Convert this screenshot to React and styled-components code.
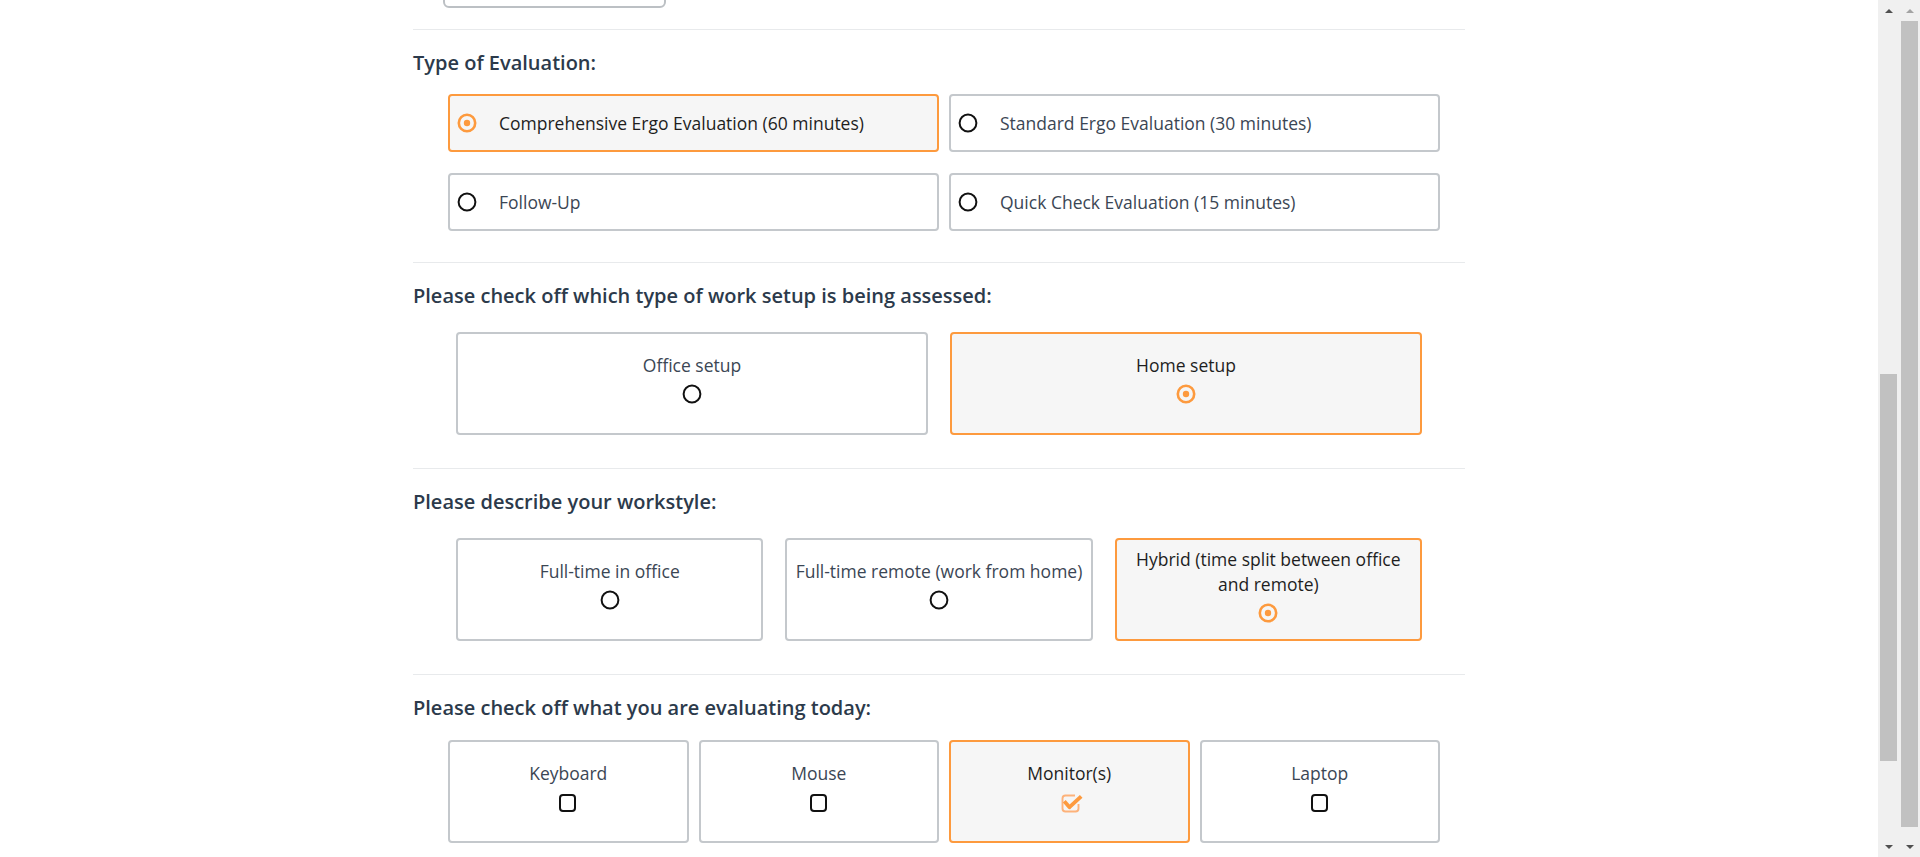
import React, { useLayoutEffect, useRef } from 'react';
import styled, { createGlobalStyle } from 'styled-components';

const ORANGE = '#fd9a3e';

const GlobalStyle = createGlobalStyle`
  html, body {
    margin: 0;
    padding: 0;
    background: #ffffff;
    overflow: hidden;
  }
  body {
    font-family: "Open Sans", "Liberation Sans", sans-serif;
  }
  * {
    box-sizing: border-box;
  }
`;

const evaluationTypes = [
  { id: 'comprehensive', label: 'Comprehensive Ergo Evaluation (60 minutes)', checked: true },
  { id: 'standard', label: 'Standard Ergo Evaluation (30 minutes)' },
  { id: 'follow-up', label: 'Follow-Up' },
  { id: 'quick', label: 'Quick Check Evaluation (15 minutes)' }
];

const setups = [
  { id: 'office', label: 'Office setup' },
  { id: 'home', label: 'Home setup', checked: true }
];

const workstyles = [
  { id: 'in-office', label: 'Full-time in office' },
  { id: 'remote', label: 'Full-time remote (work from home)' },
  { id: 'hybrid', label: 'Hybrid (time split between office and remote)', checked: true }
];

const equipment = [
  { id: 'keyboard', label: 'Keyboard' },
  { id: 'mouse', label: 'Mouse' },
  { id: 'monitor', label: 'Monitor(s)', checked: true },
  { id: 'laptop', label: 'Laptop' }
];

// fields further up the form, scrolled out of view
const earlierFields = [
  { id: 'name', width: 420 },
  { id: 'email', width: 420 },
  { id: 'date', width: 223 }
];

const RadioIcon = ({ checked }) => (
  <svg width="20" height="20" viewBox="0 0 20 20">
    {checked ? (
      <>
        <circle cx="10" cy="10" r="8.2" fill="none" stroke={ORANGE} strokeWidth="2.6" />
        <circle cx="10" cy="10" r="3.2" fill={ORANGE} />
      </>
    ) : (
      <circle cx="10" cy="10" r="8.4" fill="none" stroke="#111111" strokeWidth="2" />
    )}
  </svg>
);

const CheckIcon = ({ checked }) =>
  checked ? (
    <svg width="26" height="22" viewBox="0 0 26 22" style={{ overflow: 'visible' }}>
      <path
        d="M19 3.5 H9.5 a3 3 0 0 0 -3 3 V16.5 a3 3 0 0 0 3 3 H19.5 a3 3 0 0 0 3 -3 V12"
        fill="none"
        stroke="#fdb27a"
        strokeWidth="1.9"
      />
      <path d="M8.3 9.3 L13.5 15.2 L25.2 4.3" fill="none" stroke={ORANGE} strokeWidth="3.8" strokeLinejoin="round" />
    </svg>
  ) : (
    <svg width="22" height="22" viewBox="0 0 22 22">
      <rect x="3" y="3" width="15" height="16" rx="3" fill="none" stroke="#111111" strokeWidth="2" />
    </svg>
  );

const ScrollBar = ({ thumbTop, thumbHeight, upDisabled }) => (
  <Track>
    <ArrowBox>
      <ArrowUp $disabled={upDisabled} />
    </ArrowBox>
    <Rail>
      <Thumb style={{ marginTop: thumbTop, height: thumbHeight }} />
    </Rail>
    <ArrowBox>
      <ArrowDown />
    </ArrowBox>
  </Track>
);

const App = () => {
  const scrollerRef = useRef(null);
  const anchorRef = useRef(null);

  useLayoutEffect(() => {
    scrollerRef.current.scrollTop = anchorRef.current.offsetTop - 29;
  }, []);

  return (
    <>
      <GlobalStyle />
      <Page>
        <Scroller ref={scrollerRef}>
          <Form>
            <PriorFields>
              {earlierFields.map((field) => (
                <TextInput key={field.id} type="text" $width={field.width} readOnly />
              ))}
            </PriorFields>

            <Section ref={anchorRef} $pb={31}>
              <Question $mb={17}>Type of Evaluation:</Question>
              <ListGrid>
                {evaluationTypes.map((opt) => (
                  <ListOption key={opt.id} $checked={opt.checked}>
                    <RadioIcon checked={opt.checked} />
                    <span>{opt.label}</span>
                  </ListOption>
                ))}
              </ListGrid>
            </Section>

            <Section $pb={33}>
              <Question $mb={22}>Please check off which type of work setup is being assessed:</Question>
              <TileGrid $cols={2}>
                {setups.map((opt) => (
                  <Tile key={opt.id} $checked={opt.checked}>
                    <TileLabel>{opt.label}</TileLabel>
                    <TileMark>
                      <RadioIcon checked={opt.checked} />
                    </TileMark>
                  </Tile>
                ))}
              </TileGrid>
            </Section>

            <Section $pb={33}>
              <Question $mb={22}>Please describe your workstyle:</Question>
              <TileGrid $cols={3}>
                {workstyles.map((opt) => (
                  <Tile key={opt.id} $checked={opt.checked}>
                    <TileLabel>{opt.label}</TileLabel>
                    <TileMark>
                      <RadioIcon checked={opt.checked} />
                    </TileMark>
                  </Tile>
                ))}
              </TileGrid>
            </Section>

            <Section $pb={0}>
              <Question $mb={18}>Please check off what you are evaluating today:</Question>
              <CheckGrid>
                {equipment.map((opt) => (
                  <Tile key={opt.id} $checked={opt.checked}>
                    <TileLabel>{opt.label}</TileLabel>
                    <TileMark>
                      <CheckIcon checked={opt.checked} />
                    </TileMark>
                  </Tile>
                ))}
              </CheckGrid>
            </Section>
          </Form>
        </Scroller>
        <ScrollBar thumbTop={353} thumbHeight={387} />
        <ScrollBar thumbTop={0} thumbHeight={806} upDisabled />
      </Page>
    </>
  );
};

const Page = styled.div`
  display: flex;
  height: 100vh;
`;

const Scroller = styled.div`
  position: relative;
  flex: 1;
  min-width: 0;
  height: 100%;
  overflow-y: auto;
  scrollbar-width: none;

  &::-webkit-scrollbar {
    display: none;
  }
`;

const Track = styled.div`
  display: flex;
  flex-direction: column;
  width: 21px;
  height: 100%;
  background: #f0f0f0;
`;

const ArrowBox = styled.div`
  display: flex;
  align-items: center;
  justify-content: center;
  height: 21px;
  flex-shrink: 0;
`;

const ArrowUp = styled.div`
  width: 0;
  height: 0;
  border-left: 4.5px solid transparent;
  border-right: 4.5px solid transparent;
  border-bottom: 4.5px solid ${(p) => (p.$disabled ? '#a3a3a3' : '#505050')};
`;

const ArrowDown = styled.div`
  width: 0;
  height: 0;
  border-left: 4.5px solid transparent;
  border-right: 4.5px solid transparent;
  border-top: 4.5px solid #505050;
`;

const Rail = styled.div`
  flex: 1;
  padding: 0 2px;
`;

const Thumb = styled.div`
  background: #c1c1c1;
`;

const Form = styled.div`
  max-width: 1052px;
  margin: 0 auto;
  padding-bottom: 189px;
`;

const PriorFields = styled.div`
  display: flex;
  flex-direction: column;
  gap: 86px;
  padding: 480px 0 21px;
`;

const TextInput = styled.input`
  display: block;
  width: ${(p) => p.$width}px;
  height: 42px;
  margin-left: 30px;
  border: 2px solid #bcc0c4;
  border-radius: 6px;
  background: #ffffff;
  outline: none;
`;

const Section = styled.section`
  border-top: 1px solid #e8eaec;
  padding: 19px 0 ${(p) => p.$pb}px;
`;

const Question = styled.h3`
  margin: 0 0 ${(p) => p.$mb}px;
  font-size: 20px;
  font-weight: 600;
  line-height: 28px;
  color: #2c3a4b;
`;

const ListGrid = styled.div`
  display: grid;
  grid-template-columns: repeat(2, 1fr);
  gap: 21px 10px;
  width: 992px;
  margin-left: 35px;
`;

const ListOption = styled.div`
  display: flex;
  align-items: center;
  gap: 22px;
  height: 58px;
  padding-left: 7px;
  border: 2px solid ${(p) => (p.$checked ? ORANGE : '#c4c8cc')};
  border-radius: 4px;
  background: ${(p) => (p.$checked ? '#f6f6f6' : '#ffffff')};
  font-size: 17.5px;
  line-height: 25px;
  color: ${(p) => (p.$checked ? '#1e1e1e' : '#3b4654')};

  svg {
    flex-shrink: 0;
  }
`;

const TileGrid = styled.div`
  display: grid;
  grid-template-columns: repeat(${(p) => p.$cols}, 1fr);
  gap: 22px;
  width: 966px;
  margin-left: 43px;
`;

const CheckGrid = styled.div`
  display: grid;
  grid-template-columns: repeat(4, 1fr);
  gap: 10px;
  width: 992px;
  margin-left: 35px;
`;

const Tile = styled.div`
  display: flex;
  flex-direction: column;
  align-items: center;
  justify-content: center;
  min-height: 103px;
  padding: 4px 6px;
  border: 2px solid ${(p) => (p.$checked ? ORANGE : '#c4c8cc')};
  border-radius: 4px;
  background: ${(p) => (p.$checked ? '#f6f6f6' : '#ffffff')};
  color: ${(p) => (p.$checked ? '#1e1e1e' : '#3b4654')};
  text-align: center;
`;

const TileLabel = styled.div`
  font-size: 17.5px;
  line-height: 25px;
`;

const TileMark = styled.div`
  display: flex;
  justify-content: center;
  height: 20px;
  margin: 6px 0 10px;

  svg {
    display: block;
  }
`;

export default App;
